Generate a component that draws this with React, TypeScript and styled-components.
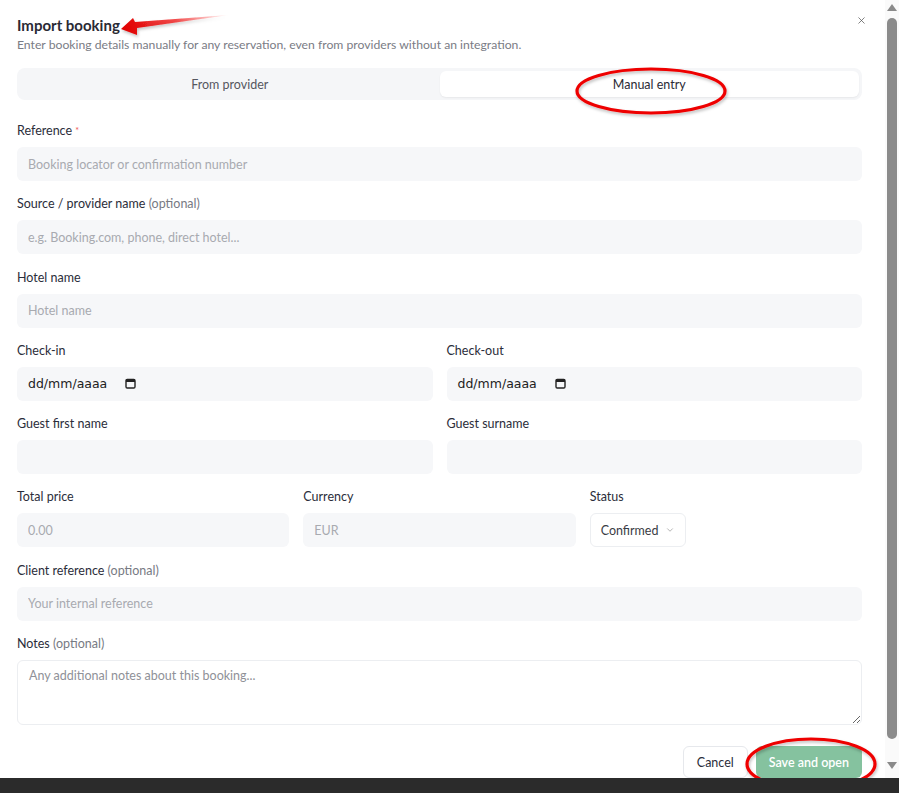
import styled, { createGlobalStyle } from 'styled-components';
import { X, ChevronDown } from 'lucide-react';

const GlobalStyle = createGlobalStyle`
  html, body {
    margin: 0;
    padding: 0;
    background: #2b2b2b;
  }
  * {
    box-sizing: border-box;
  }
`;

function CalendarGlyph() {
  return (
    <svg width="11" height="11" viewBox="0 0 11 11">
      <rect x="1" y="1.5" width="9" height="8.5" rx="1.2" fill="none" stroke="#222" strokeWidth="1.4" />
      <rect x="1" y="1.5" width="9" height="2.5" fill="#222" />
    </svg>
  );
}

function App() {
  return (
    <>
      <GlobalStyle />
      <Window>
        <Dialog>
          <Content>
            <Header>
              <Title>Import booking</Title>
              <Subtitle>
                Enter booking details manually for any reservation, even from providers without an integration.
              </Subtitle>
              <CloseButton>
                <X size={11} strokeWidth={1.6} />
              </CloseButton>
            </Header>

            <Tabs>
              <Tab>From provider</Tab>
              <Tab $active>Manual entry</Tab>
            </Tabs>

            <Form>
              <Field>
                <Label>
                  Reference <Required>*</Required>
                </Label>
                <Input placeholder="Booking locator or confirmation number" />
              </Field>

              <Field>
                <Label>
                  Source / provider name <Muted>(optional)</Muted>
                </Label>
                <Input placeholder="e.g. Booking.com, phone, direct hotel..." />
              </Field>

              <Field>
                <Label>Hotel name</Label>
                <Input placeholder="Hotel name" />
              </Field>

              <Row $cols={2}>
                <Field>
                  <Label>Check-in</Label>
                  <DateBox>
                    <span>dd/mm/aaaa</span>
                    <CalendarGlyph />
                  </DateBox>
                </Field>
                <Field>
                  <Label>Check-out</Label>
                  <DateBox>
                    <span>dd/mm/aaaa</span>
                    <CalendarGlyph />
                  </DateBox>
                </Field>
              </Row>

              <Row $cols={2}>
                <Field>
                  <Label>Guest first name</Label>
                  <Input />
                </Field>
                <Field>
                  <Label>Guest surname</Label>
                  <Input />
                </Field>
              </Row>

              <Row $cols={3}>
                <Field>
                  <Label>Total price</Label>
                  <Input placeholder="0.00" />
                </Field>
                <Field>
                  <Label>Currency</Label>
                  <Input placeholder="EUR" />
                </Field>
                <Field>
                  <Label>Status</Label>
                  <Select>
                    Confirmed
                    <ChevronDown size={10} strokeWidth={1.5} color="#888" />
                  </Select>
                </Field>
              </Row>

              <Field>
                <Label>
                  Client reference <Muted>(optional)</Muted>
                </Label>
                <Input placeholder="Your internal reference" />
              </Field>

              <Field>
                <Label>
                  Notes <Muted>(optional)</Muted>
                </Label>
                <TextArea placeholder="Any additional notes about this booking..." />
              </Field>
            </Form>

            <Footer>
              <CancelButton>Cancel</CancelButton>
              <SaveButton>Save and open</SaveButton>
            </Footer>

            <Annotations width="885" height="800" viewBox="0 0 885 800">
              <defs>
                <linearGradient id="arrowFade" x1="229" y1="16" x2="121" y2="29" gradientUnits="userSpaceOnUse">
                  <stop offset="0" stopColor="#ff2020" stopOpacity="0" />
                  <stop offset="0.5" stopColor="#ee1010" stopOpacity="0.75" />
                  <stop offset="1" stopColor="#e00000" />
                </linearGradient>
                <filter id="soft" x="-20%" y="-40%" width="140%" height="180%">
                  <feDropShadow dx="1" dy="2" stdDeviation="1.5" floodColor="#000" floodOpacity="0.25" />
                </filter>
              </defs>
              <polygon
                points="121,29 133,18 135,22 229,15 137,28 137,35"
                fill="url(#arrowFade)"
                filter="url(#soft)"
              />
              <ellipse cx="651" cy="91" rx="74" ry="22" fill="none" stroke="#ee0000" strokeWidth="3.2" filter="url(#soft)" />
              <ellipse cx="811" cy="764" rx="64" ry="25" fill="none" stroke="#ee0000" strokeWidth="3.2" filter="url(#soft)" />
            </Annotations>
          </Content>
        </Dialog>

        <ScrollRail>
          <svg width="10" height="7" viewBox="0 0 10 7">
            <polygon points="5,0 10,7 0,7" fill="#8a8a8a" />
          </svg>
          <Thumb />
          <svg width="10" height="7" viewBox="0 0 10 7">
            <polygon points="0,0 10,0 5,7" fill="#8a8a8a" />
          </svg>
        </ScrollRail>
      </Window>
    </>
  );
}

const Window = styled.div`
  display: flex;
  height: 778px;
  background: #fff;
`;

const Dialog = styled.div`
  flex: 1;
  min-width: 0;
  overflow: hidden;
  font-family: Lato, 'Open Sans', sans-serif;
  color: #2b2d3a;
`;

const ScrollRail = styled.div`
  width: 14px;
  display: flex;
  flex-direction: column;
  align-items: center;
  padding: 4px 0 9px;
  gap: 7px;
  background: #fafafa;
`;

const Thumb = styled.div`
  flex: 1;
  width: 10px;
  margin-bottom: 16px;
  border-radius: 5px;
  background: #8b8b8b;
`;

const Content = styled.div`
  position: relative;
  padding: 14px 23px 28px 17px;
`;

const Header = styled.div`
  position: relative;
`;

const Title = styled.h2`
  margin: 0;
  font-size: 15px;
  line-height: 22px;
  font-weight: 700;
  color: #2a2a35;
`;

const Subtitle = styled.p`
  margin: 0;
  font-size: 12.2px;
  line-height: 18px;
  color: #7a7c85;
`;

const CloseButton = styled.div`
  position: absolute;
  top: -2px;
  right: -7px;
  width: 16px;
  height: 16px;
  display: flex;
  align-items: center;
  justify-content: center;
  color: #555;
`;

const Tabs = styled.div`
  margin-top: 14px;
  display: grid;
  grid-template-columns: 1fr 1fr;
  padding: 3px;
  height: 32px;
  background: #f5f6f8;
  border-radius: 8px;
`;

const Tab = styled.div<{ $active?: boolean }>`
  display: flex;
  align-items: center;
  justify-content: center;
  font-size: 12.5px;
  color: ${(p) => (p.$active ? '#2a2a35' : '#55575f')};
  background: ${(p) => (p.$active ? '#fff' : 'transparent')};
  border-radius: 6px;
  box-shadow: ${(p) => (p.$active ? '0 1px 2px rgba(0,0,0,0.06)' : 'none')};
`;

const Form = styled.div`
  margin-top: 22px;
  display: flex;
  flex-direction: column;
  gap: 14.3px;
`;

const Row = styled.div<{ $cols: number }>`
  display: grid;
  grid-template-columns: repeat(${(p) => p.$cols}, 1fr);
  gap: 14px;
`;

const Field = styled.div`
  display: flex;
  flex-direction: column;
  gap: 7px;
  align-items: flex-start;
`;

const Label = styled.label`
  font-size: 12.5px;
  line-height: 18px;
  color: #2b2d3a;
`;

const Required = styled.span`
  color: #e55;
  font-size: 9px;
  vertical-align: top;
`;

const Muted = styled.span`
  color: #777a83;
`;

const Input = styled.input`
  width: 100%;
  height: 34px;
  padding: 0 11px;
  border: none;
  outline: none;
  border-radius: 6px;
  background: #f6f7f9;
  font-family: inherit;
  font-size: 12.5px;
  color: #2b2d3a;

  &::placeholder {
    color: #a8aab0;
  }
`;

const DateBox = styled.div`
  width: 100%;
  height: 34px;
  padding: 0 11px;
  border-radius: 6px;
  background: #f6f7f9;
  display: flex;
  align-items: center;
  gap: 18px;
  font-family: 'DejaVu Sans', sans-serif;
  font-size: 12.5px;
  color: #222;
`;

const Select = styled.div`
  height: 34px;
  padding: 0 10px;
  border: 1px solid #eceef1;
  border-radius: 6px;
  background: #fff;
  display: flex;
  align-items: center;
  gap: 7px;
  font-size: 12.5px;
  color: #3a3c45;
`;

const TextArea = styled.textarea`
  width: 100%;
  height: 65px;
  padding: 7px 11px;
  border: 1px solid #eceef1;
  border-radius: 6px;
  background: #fff;
  outline: none;
  font-family: inherit;
  font-size: 12.5px;
  color: #2b2d3a;
  resize: vertical;

  &::placeholder {
    color: #8f9198;
  }
`;

const Footer = styled.div`
  margin-top: 21px;
  display: flex;
  justify-content: flex-end;
  gap: 8px;
`;

const CancelButton = styled.button`
  height: 32px;
  padding: 0 13px;
  border: 1px solid #e6e8ec;
  border-radius: 6px;
  background: #fff;
  font-family: inherit;
  font-size: 12.5px;
  color: #2b2d3a;
`;

const SaveButton = styled.button`
  height: 32px;
  padding: 0 13px;
  border: none;
  border-radius: 6px;
  background: #85c29f;
  font-family: inherit;
  font-size: 12.5px;
  font-weight: 600;
  color: #fff;
`;

const Annotations = styled.svg`
  position: absolute;
  left: 0;
  top: 0;
  pointer-events: none;
  overflow: visible;
`;

export default App;
